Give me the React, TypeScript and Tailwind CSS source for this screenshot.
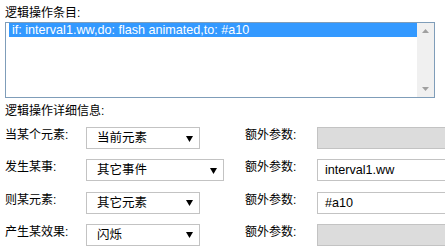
import React from "react"

const cjk = "font-['Liberation_Sans','Noto_Sans_CJK_SC',sans-serif]"

interface Row {
  label: string
  value: string
  selectWidth: string
  param: string
  disabled: boolean
}

const rows: Row[] = [
  { label: "当某个元素:", value: "当前元素", selectWidth: "w-[114px]", param: "", disabled: true },
  { label: "发生某事:", value: "其它事件", selectWidth: "w-[138px]", param: "interval1.ww", disabled: false },
  { label: "则某元素:", value: "其它元素", selectWidth: "w-[114px]", param: "#a10", disabled: false },
  { label: "产生某效果:", value: "闪烁", selectWidth: "w-[114px]", param: "", disabled: true },
]

function Arrow({ up }: { up?: boolean }) {
  return (
    <svg width="7" height="4" viewBox="0 0 7 4" className={up ? "rotate-180" : ""}>
      <path d="M0 0h7L3.5 4z" fill="#a0a0a0" />
    </svg>
  )
}

function Select({ value, width }: { value: string; width: string }) {
  return (
    <div
      className={`${width} h-[22px] border border-[#c3c3c3] bg-white flex items-center pl-[10px] pr-[6px] text-[12.5px] text-black`}
    >
      <span className="flex-1 leading-[14px]">{value}</span>
      <svg width="7" height="7" viewBox="0 0 7 7">
        <path d="M0 1h7L3.5 7z" fill="#000" />
      </svg>
    </div>
  )
}

export default function App() {
  return (
    <div className={`w-[445px] h-[249px] overflow-hidden bg-white text-black ${cjk}`}>
      <div className="pl-[5px] pt-[6px] text-[12px] leading-[15px]">逻辑操作条目:</div>

      <div className="ml-[5px] mt-px w-[430px] h-[76px] border border-[#7f9db9] flex">
        <div className="flex-1 pl-[3px]">
          <div className="h-[14px] bg-[#3399ff] text-white text-[12.6px] leading-[14px] pl-[3px]">
            if: interval1.ww,do: flash animated,to: #a10
          </div>
        </div>
        <div className="w-[17px] bg-[#f0f0f0] flex flex-col items-center justify-between py-[6px]">
          <Arrow up />
          <Arrow />
        </div>
      </div>

      <div className="pl-[5px] mt-[6px] text-[12px] leading-[15px]">逻辑操作详细信息:</div>

      <div className="mt-[8px] flex flex-col gap-[10.3px]">
        {rows.map((r) => (
          <div key={r.label} className="flex items-start h-[22px] text-[12px]">
            <div className="w-[86px] pl-[5px] leading-[14px] mt-[1px] shrink-0">{r.label}</div>
            <div className="w-[159px] shrink-0">
              <Select value={r.value} width={r.selectWidth} />
            </div>
            <div className="w-[72px] leading-[14px] mt-[1px] shrink-0">额外参数:</div>
            <div
              className={`w-[150px] h-[22px] shrink-0 border border-[#c3c3c3] flex items-center pl-[7px] text-[12.6px] leading-[14px] ${
                r.disabled ? "bg-[#dcdcdc]" : "bg-white"
              }`}
            >
              {r.param}
            </div>
          </div>
        ))}
      </div>
    </div>
  )
}
